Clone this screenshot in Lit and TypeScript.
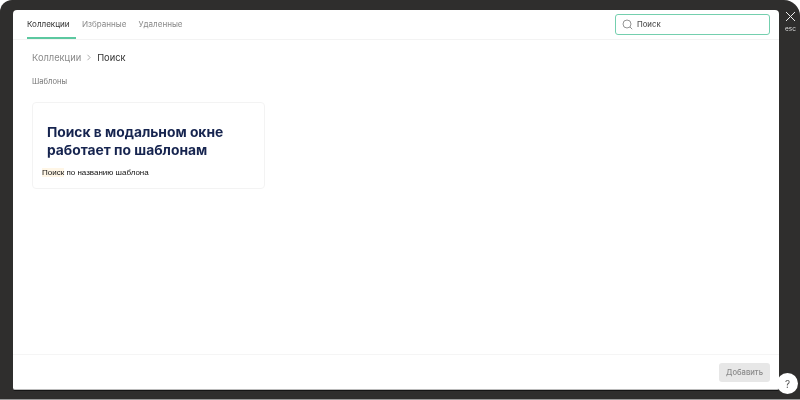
import { LitElement, html, css } from "lit";
import { customElement } from "lit/decorators.js";

@customElement("app-root")
export class AppRoot extends LitElement {
  static styles = css`
    :host {
      display: block;
      width: 800px;
      height: 400px;
      font-family: Inter, "Liberation Sans", sans-serif;
      overflow: hidden;
    }
    .page { background: #fff; width: 800px; height: 400px; }
    .backdrop {
      box-sizing: border-box;
      width: 800px;
      height: 399px;
      background: #2f2e2d;
      border-radius: 12px 16px 0 0;
      padding: 10px 21px 9px 13px;
      position: relative;
      box-shadow: 0 1px 0 #999;
    }
    .modal {
      height: 380px;
      background: #fff;
      border-radius: 4px 4px 2px 2px;
      display: flex;
      flex-direction: column;
      box-shadow: 0 1px 0 #151515;
      border-bottom: 1px solid #bbb;
      box-sizing: border-box;
    }
    .top, .body, .foot, .close, .help { will-change: transform; }
    .top {
      height: 29px;
      display: flex;
      justify-content: space-between;
      border-bottom: 1px solid #f3f3f3;
      padding: 0 9px 0 14px;
    }
    .tabs { display: flex; }
    .tab {
      font-size: 8.05px;
      line-height: 28px;
      color: #8a8a8a;
      margin-right: 12px;
      height: 29px;
      box-sizing: border-box;
    }
    .tab.on {
      color: #333;
      border-bottom: 2px solid #5cc8a0;
      width: 49px;
      margin-right: 6px;
    }
    .search {
      box-sizing: border-box;
      margin-top: 4px;
      width: 155px;
      height: 21px;
      border: 1px solid #74cfae;
      border-radius: 3px;
      display: flex;
      align-items: center;
      gap: 4px;
      padding: 0 5px 0 6px;
      font-size: 7.7px;
      font-weight: 500;
      color: #555;
    }
    .body { flex: 1; padding: 0 19px; }
    .crumbs {
      display: flex;
      align-items: center;
      font-size: 9.3px;
      height: 18px;
      margin-top: 8px;
      color: #8a8a8a;
      gap: 5px;
    }
    .crumbs b { font-weight: 400; color: #333; }
    .sec { font-size: 7.6px; color: #777; margin-top: 10px; line-height: 12px; }
    .card {
      box-sizing: border-box;
      width: 233px;
      height: 87px;
      margin-top: 14px;
      border: 1px solid #f3f3f3;
      border-radius: 4px;
      padding: 21px 9px 0;
    }
    .card h3 {
      margin: 0 0 0 5px;
      font-size: 13.8px;
      line-height: 17.5px;
      font-weight: 700;
      color: #16244f;
    }
    .card p {
      margin: 8px 0 0;
      font-family: "Liberation Sans", sans-serif;
      font-size: 8px;
      line-height: 12px;
      color: #111;
    }
    .card mark { background: #fff6e6; color: inherit; }
    .foot {
      box-sizing: border-box;
      height: 35px;
      border-top: 1px solid #f5f5f5;
      display: flex;
      justify-content: flex-end;
      align-items: center;
      padding: 0 9px;
    }
    .add {
      width: 51px;
      height: 19px;
      background: #e7e7e7;
      border-radius: 3px;
      font-size: 7.65px;
      font-weight: 500;
      color: #8a8a8a;
      display: flex;
      align-items: center;
      justify-content: center;
    }
    .close {
      position: absolute;
      top: 11px;
      right: 3px;
      width: 13px;
      display: flex;
      flex-direction: column;
      align-items: center;
      gap: 3px;
      color: #ddd;
      font-size: 6.5px;
      line-height: 8px;
    }
    .help {
      position: absolute;
      right: 2px;
      bottom: 5px;
      width: 21px;
      height: 21px;
      border-radius: 50%;
      background: #fff;
      color: #555;
      font-size: 10px;
      display: flex;
      align-items: center;
      justify-content: center;
    }
  `;
  render() {
    return html`
      <div class="page"><div class="backdrop">
        <div class="modal">
          <div class="top">
            <div class="tabs">
              <div class="tab on">Коллекции</div>
              <div class="tab">Избранные</div>
              <div class="tab">Удаленные</div>
            </div>
            <div class="search">
              <svg width="11" height="11" viewBox="0 0 11 11" fill="none" stroke="#888" stroke-width="0.9">
                <circle cx="5" cy="5" r="4"></circle><path d="M8 8l2.2 2.2"></path>
              </svg>
              Поиск
            </div>
          </div>
          <div class="body">
            <div class="crumbs">
              <span>Коллекции</span>
              <svg width="6" height="7" viewBox="0 0 6 7" fill="none" stroke="#999" stroke-width="0.8"><path d="M1.5 .8l2.6 2.7-2.6 2.7"></path></svg>
              <b>Поиск</b>
            </div>
            <div class="sec">Шаблоны</div>
            <div class="card">
              <h3>Поиск в модальном окне работает по шаблонам</h3>
              <p><mark>Поиск</mark> по названию шаблона</p>
            </div>
          </div>
          <div class="foot"><div class="add">Добавить</div></div>
        </div>
        <div class="close">
          <svg width="11" height="11" viewBox="0 0 11 11" stroke="#eee" stroke-width="1"><path d="M1 1l9 9M10 1l-9 9"></path></svg>
          <span>esc</span>
        </div>
        <div class="help">?</div>
      </div></div>
    `;
  }
}
